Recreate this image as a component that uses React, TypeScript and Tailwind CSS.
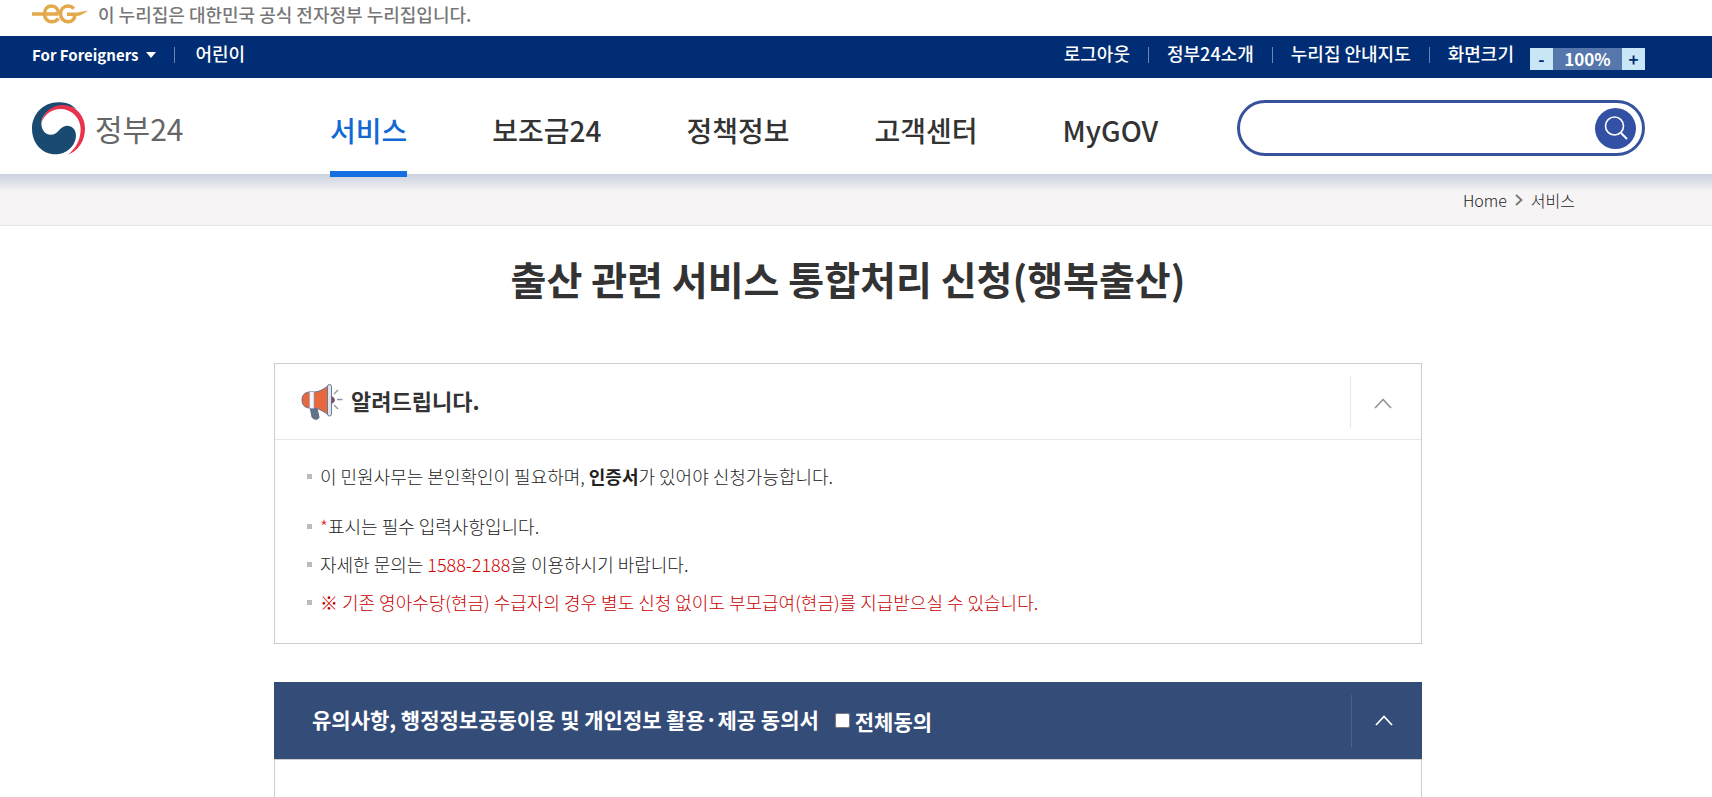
import { useState } from 'react';
import type { ReactNode } from 'react';

const NAV_ITEMS = ['서비스', '보조금24', '정책정보', '고객센터', 'MyGOV'];
const UTIL_ITEMS = ['로그아웃', '정부24소개', '누리집 안내지도'];

const EgMark = () => (
  <svg viewBox="0 0 56 20" className="h-5 w-14" fill="none" aria-hidden="true">
    <g stroke="#e3a94b" strokeWidth="3.500">
      <path d="M0 10H26.500" />
      <path d="M26.500 10C26.500 5 23.500 2 19.500 2C15 2 12.500 5.500 12.500 10C12.500 14.500 15.500 17.800 19.500 17.800C22.500 17.800 25 16.500 26.500 14.500" />
      <path d="M42 4.500C40 2.700 38 2 36 2C31.500 2 28.500 5.500 28.500 10C28.500 14.500 32 17.800 36 17.800C40 17.800 42.500 15 43 11" />
    </g>
    <path d="M35 8.500H45L56 6.500C52 10 48 12 44 12H35Z" fill="#e3a94b" />
  </svg>
);

const Emblem = () => (
  <svg viewBox="0 0 158 156" className="size-[53px]" aria-hidden="true">
    <path
      fill="#1b4a70"
      d="M132 20C110 -2 85 0 78 0C34 0 0 35 0 79C0 125 34 156 70 155C102 155 131 130 131 98C131 82 120 70 104 70C84 70 78 97 56 97C38 97 28 80 28 64C28 36 55 14 88 12C105 11 120 14 132 20Z"
    />
    <path
      fill="#e8334f"
      d="M28 62C32 30 60 8 92 8C132 8 158 42 158 78C158 115 138 145 107 156C132 136 145 110 145 80C145 48 120 22 88 20C60 19 36 36 28 62Z"
    />
  </svg>
);

const Megaphone = () => (
  <svg viewBox="0 0 42 36" className="h-9 w-[42px]" aria-hidden="true">
    <path d="M9 23L16 24L18 33C18 36 12 36 11 33Z" fill="#5f7288" stroke="#5f6d85" />
    <path d="M9 8C3 8 1 12 1 16C1 20 3 24 9 24H14C19 25 23 28 28 31V1C23 5 19 7.500 14 8Z" fill="#e5683f" stroke="#6b708a" />
    <path d="M8.500 7.500H13V24.500H8.500Z" fill="#f3f5fb" stroke="#8d9ab5" strokeWidth=".6" />
    <rect x="26.500" y="0.500" width="4" height="31.500" rx="2" fill="#dfe5ef" stroke="#6d7994" />
    <path d="M31 13C34 13 34 19 31 19Z" fill="#a8433c" stroke="#6b5470" />
    <path d="M33 10L37 6M36 15.500H41.500M33 21L37 25" stroke="#8d94a8" strokeWidth="1.300" />
  </svg>
);

const Chevron = ({ className }: { className: string }) => (
  <svg viewBox="0 0 18 11" className={`h-[11px] w-[18px] ${className}`} fill="none" aria-hidden="true">
    <path d="M1 10L9 1.500L17 10" stroke="currentColor" strokeWidth="1.800" />
  </svg>
);

const Divider = () => <span className="h-4 w-px bg-[#6a86b5]" />;

const TopBar = () => {
  const [zoom, setZoom] = useState(100);

  return (
    <div className="flex h-[42px] items-center bg-[#002d73] pr-[67px] pb-1 pl-8 text-white">
      <button className="flex items-center gap-2 text-[15px] font-bold">
        For Foreigners
        <svg viewBox="0 0 10 6" className="h-1.5 w-2.5" aria-hidden="true">
          <path d="M0 0H10L5 6Z" fill="currentColor" />
        </svg>
      </button>
      <div className="ml-[18px] flex items-center gap-5">
        <Divider />
        <a href="#kids" className="pb-1 text-lg leading-6 font-medium">어린이</a>
      </div>

      <div className="ml-auto flex items-center gap-[18px] text-lg leading-6 font-medium">
        {UTIL_ITEMS.map((item) => (
          <span key={item} className="flex items-center gap-[18px]">
            <a href="#util" className="pb-1">{item}</a>
            <Divider />
          </span>
        ))}
        <div className="flex items-center gap-4">
          <span className="pb-1">화면크기</span>
          <div className="mt-2 flex h-[22px] items-center text-[17px] leading-[22px] font-bold">
            <button aria-label="축소" className="w-[23px] bg-[#c9e6f7] text-[#002d73]" onClick={() => setZoom(zoom - 10)}>-</button>
            <span className="w-[69px] bg-[#5577ab] text-center">{zoom}%</span>
            <button aria-label="확대" className="w-[23px] bg-[#c9e6f7] text-[#002d73]" onClick={() => setZoom(zoom + 10)}>+</button>
          </div>
        </div>
      </div>
    </div>
  );
};

const Header = () => (
  <header className="flex h-24 items-center pt-1 pr-[67px] pl-8">
    <a href="#home" className="flex w-[298px] items-center gap-[10px]">
      <Emblem />
      <span className="text-[30px] leading-10 text-[#666]">정부24</span>
    </a>
    <nav className="flex h-full gap-[85px]">
      {NAV_ITEMS.map((item, i) => (
        <a
          key={item}
          href="#menu"
          className={`relative flex items-center pt-1 text-[28px] leading-10 font-medium ${i === 0 ? 'text-[#1269d3]' : 'text-[#333]'}`}
        >
          {item}
          {i === 0 && <span className="absolute inset-x-0 -bottom-[3px] h-1.5 bg-[#1470e0]" />}
        </a>
      ))}
    </nav>
    <form className="ml-auto flex h-14 w-[408px] items-center rounded-full border-3 border-[#36529c] pr-[6px] pl-6" onSubmit={(e) => e.preventDefault()}>
      <input type="text" aria-label="검색어" className="min-w-0 flex-1 text-lg outline-none" />
      <button aria-label="검색" className="flex size-[41px] items-center justify-center rounded-full bg-[#3250a4] text-white">
        <svg viewBox="0 0 24 24" className="size-6" fill="none" stroke="currentColor" strokeWidth="1.600" aria-hidden="true">
          <circle cx="10.500" cy="10" r="9" />
          <path d="M17 17L23 23" strokeWidth="2" />
        </svg>
      </button>
    </form>
  </header>
);

const Bullet = ({ className = '', children }: { className?: string; children: ReactNode }) => (
  <li className={`flex items-center gap-2 ${className}`}>
    <span className="size-[5px] shrink-0 bg-[#bbb]" />
    <span>{children}</span>
  </li>
);

export default function App() {
  const [noticeOpen, setNoticeOpen] = useState(true);
  const [termsOpen, setTermsOpen] = useState(true);

  return (
    <div className="flex min-h-screen flex-col bg-white font-['Noto_Sans_CJK_KR',sans-serif] text-[#333]">
      <div className="flex h-9 items-center gap-[10px] pb-2 pl-8 text-[18px] leading-6 font-medium text-[#777]">
        <EgMark />
        이 누리집은 대한민국 공식 전자정부 누리집입니다.
      </div>
      <TopBar />
      <Header />

      {/* Breadcrumb */}
      <div className="flex h-[52px] items-center justify-end gap-2 border-b border-[#e5e5e5] bg-linear-to-b from-[#cbd1de] to-[#f6f4f5] to-35% pr-[137px] text-base font-light text-[#222]">
        <a href="#home">Home</a>
        <svg viewBox="0 0 8 12" className="h-3 w-2" fill="none" aria-hidden="true">
          <path d="M1 1L6.500 6L1 11" stroke="#777" strokeWidth="1.800" />
        </svg>
        <a href="#service">서비스</a>
      </div>

      <main className="mr-4 flex flex-1 flex-col items-center">
        <h1 className="mt-6 text-[39px] leading-[56px] font-bold">출산 관련 서비스 통합처리 신청(행복출산)</h1>

        <div className="mt-[57px] flex w-full max-w-[1148px] flex-1 flex-col">
          {/* Notice */}
          <section className="border border-[#ccc]">
            <div className={`flex h-[76px] items-center border-[#e8e8e8] pl-[26px] ${noticeOpen ? 'border-b' : ''}`}>
              <Megaphone />
              <h2 className="ml-2 pb-1 text-[22px] leading-8 font-bold">알려드립니다.</h2>
              <button
                aria-label="알려드립니다 접기"
                className="ml-auto flex h-[52px] w-[71px] items-center justify-center border-l border-[#e8e8e8] pt-1 pr-1.5"
                onClick={() => setNoticeOpen(!noticeOpen)}
              >
                <Chevron className="text-[#999]" />
              </button>
            </div>
            {noticeOpen && (
              <ul className="flex flex-col gap-[14px] px-8 pt-6 pb-[29px] text-[18px] leading-6 font-light text-[#222]">
                <Bullet className="mb-3">
                  이 민원사무는 본인확인이 필요하며, <strong className="font-bold">인증서</strong>가 있어야 신청가능합니다.
                </Bullet>
                <Bullet><span className="text-[#e02020]">*</span>표시는 필수 입력사항입니다.</Bullet>
                <Bullet>자세한 문의는 <span className="text-[#d60000]">1588-2188</span>을 이용하시기 바랍니다.</Bullet>
                <Bullet>
                  <span className="text-[#c80000]">※ 기존 영아수당(현금) 수급자의 경우 별도 신청 없이도 부모급여(현금)를 지급받으실 수 있습니다.</span>
                </Bullet>
              </ul>
            )}
          </section>

          {/* Consent */}
          <section className="mt-[38px] flex flex-1 flex-col">
            <div className="flex h-[77px] items-center bg-[#344c78] pl-[38px] text-[21px] leading-8 font-bold text-white">
              <h2 className="pb-1">유의사항, 행정정보공동이용 및 개인정보 활용·제공 동의서</h2>
              <label className="ml-4 flex items-center gap-[5px]">
                <input type="checkbox" className="size-[15px]" />
                전체동의
              </label>
              <button
                aria-label="동의서 접기"
                className="ml-auto flex h-[52px] w-[71px] items-center justify-center border-l border-[#4c628b] pr-1.5"
                onClick={() => setTermsOpen(!termsOpen)}
              >
                <Chevron className="text-white" />
              </button>
            </div>
            {termsOpen && <div className="flex-1 border-x border-t border-[#ccc]" />}
          </section>
        </div>
      </main>
    </div>
  );
}
